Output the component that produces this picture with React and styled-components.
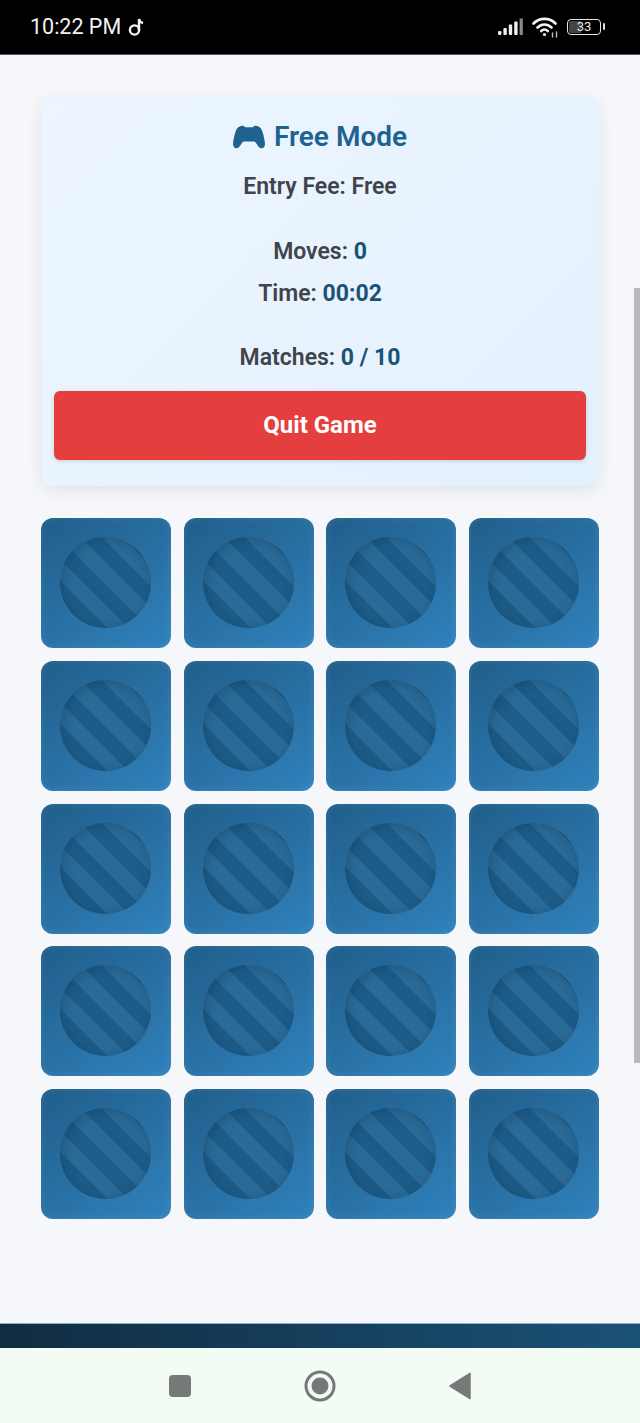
import React from 'react'
import styled, { createGlobalStyle } from 'styled-components'

const GlobalStyle = createGlobalStyle`
  html, body {
    margin: 0;
    padding: 0;
    background: #f5f7fb;
    font-family: Roboto, "Liberation Sans", sans-serif;
  }
`

const Screen = styled.div`
  position: relative;
  width: 640px;
  height: 1423px;
  display: flex;
  flex-direction: column;
  overflow: hidden;
`

const StatusBar = styled.div`
  height: 55px;
  flex: none;
  background: #000;
  border-bottom: 1px solid #555;
  display: flex;
  align-items: center;
  justify-content: space-between;
  padding: 0 33px 1px 30px;
  box-sizing: border-box;
  color: #f2f2f2;
`

const Clock = styled.div`
  display: flex;
  align-items: center;
  gap: 7px;
  font-size: 21.5px;
`

const StatusIcons = styled.div`
  display: flex;
  align-items: center;
  gap: 8px;
`

const Battery = styled.div`
  position: relative;
  width: 34px;
  height: 16px;
  border: 1.5px solid #e8e8e8;
  border-radius: 4px;
  box-sizing: border-box;
  display: flex;
  align-items: center;
  justify-content: center;
  font-size: 13px;
  color: #e8e8e8;
  margin-right: 6px;
  background: linear-gradient(90deg, #444 0, #444 42%, #000 42%);
  background-clip: content-box;
  padding: 1px;
  &::after {
    content: '';
    position: absolute;
    right: -5px;
    top: 3px;
    width: 2px;
    height: 7px;
    background: #ddd;
    border-radius: 1px;
  }
`

const Page = styled.main`
  flex: 1;
  padding: 42px 41px 0;
  box-sizing: border-box;
  background: #f5f7fb;
`

const InfoCard = styled.section`
  height: 389px;
  box-sizing: border-box;
  padding: 26px 13px 0;
  border-radius: 12px;
  background: linear-gradient(135deg, #edf6ff, #e3f0fe);
  box-shadow: 0 4px 16px rgba(0, 0, 0, 0.09);
  display: flex;
  flex-direction: column;
  align-items: center;
`

const Title = styled.h2`
  margin: 0;
  height: 28px;
  display: flex;
  align-items: center;
  gap: 9px;
  font-size: 28px;
  line-height: 28px;
  font-weight: 600;
  color: #20628f;
`

const Line = styled.p`
  margin: ${(p) => p.$top}px 0 0;
  font-size: 23px;
  line-height: 25px;
  font-weight: 600;
  color: #40444a;
`

const Value = styled.span`
  color: #1a5276;
  font-weight: 700;
`

const QuitButton = styled.button`
  margin-top: 21px;
  width: 100%;
  height: 69px;
  flex: none;
  border: none;
  border-radius: 6px;
  padding: 0 0 2px;
  background: #e53e3e;
  color: #fff;
  font-family: inherit;
  font-size: 24px;
  font-weight: 700;
  box-shadow: 0 1px 4px rgba(0, 0, 0, 0.15);
`

const Board = styled.div`
  margin-top: 32px;
  display: grid;
  grid-template-columns: repeat(4, 130px);
  grid-auto-rows: 130px;
  gap: 12.75px 12.67px;
`

const Tile = styled.div`
  border-radius: 12px;
  background: linear-gradient(145deg, #205e8a, #3081bc);
  box-shadow: inset 0 0 7px rgba(255, 255, 255, 0.1);
  display: flex;
  align-items: center;
  justify-content: center;
  padding: 0 1px 1px 0;
  box-sizing: border-box;
`

const Disc = styled.div`
  width: 91px;
  height: 91px;
  border-radius: 50%;
  background: repeating-linear-gradient(
    45deg,
    #1d5c88 -11.5px,
    #1d5c88 3.5px,
    #2a6a97 3.5px,
    #2a6a97 18.5px,
    #1d5c88 18.5px
  );
  box-shadow: inset 2px 2px 12px rgba(8, 40, 65, 0.28);
`

const FooterBar = styled.div`
  height: 25px;
  flex: none;
  background: linear-gradient(90deg, #112c42, #1a5276);
  border-top: 1px solid #8fb0c4;
  box-sizing: border-box;
`

const NavBar = styled.nav`
  height: 75px;
  flex: none;
  background: #f2fcf5;
  display: grid;
  grid-template-columns: repeat(3, 140px);
  justify-content: center;
  align-items: center;
  justify-items: center;
`

const ScrollThumb = styled.div`
  position: absolute;
  right: 0;
  top: 288px;
  width: 6px;
  height: 775px;
  background: #b9b9b9;
`

const GamepadIcon = () => (
  <svg width="32" height="24" viewBox="0 0 32 24" fill="#20628f">
    <path d="M7 1.2C8.8.4 11 .5 12 2.2h8C21 .5 23.2.4 25 1.2c2.6 1.1 4 3.4 4.9 6.8.9 3.3 1.8 7 2 10.2.2 2.6-.7 4.6-2.7 5-2 .4-3.2-.7-4.3-2.4l-2-3c-.7-1-1.4-1.4-2.6-1.4h-8.6c-1.2 0-1.9.4-2.6 1.4l-2 3c-1.1 1.7-2.3 2.8-4.3 2.4-2-.4-2.9-2.4-2.7-5 .2-3.2 1.1-6.9 2-10.2C3 4.6 4.4 2.3 7 1.2z" />
  </svg>
)

const MusicNote = () => (
  <svg width="16" height="20" viewBox="0 0 16 20" fill="none" stroke="#f2f2f2" strokeWidth="2.4">
    <circle cx="6.5" cy="13" r="4.6" />
    <path d="M11 13V2c.4 2.4 2 3.6 4 4" />
  </svg>
)

const SignalIcon = () => (
  <svg width="26" height="18" viewBox="0 0 26 18">
    <rect x="0" y="13" width="3.4" height="4" rx="1.2" fill="#f0f0f0" />
    <rect x="5.4" y="10" width="3.4" height="7" rx="1" fill="#f0f0f0" />
    <rect x="10.8" y="6.5" width="3.4" height="10.5" rx="1" fill="#f0f0f0" />
    <rect x="16.2" y="3.5" width="3.4" height="13.5" rx="1" fill="#f0f0f0" />
    <rect x="21.6" y="0.5" width="3.2" height="16.5" fill="#8a8a8a" />
  </svg>
)

const WifiIcon = () => (
  <svg width="27" height="22" viewBox="0 0 27 22" fill="none" stroke="#f4f4f4" strokeWidth="2.6" strokeLinecap="round">
    <path d="M1.5 7.5C7.5 1.3 17.5 1.3 23.5 7.5" />
    <path d="M5.5 11.5C9.5 7.4 15.5 7.4 19.5 11.5" />
    <path d="M9.2 15C11.2 13.2 13.8 13.2 15.8 15" />
    <circle cx="12.5" cy="18.5" r="1.6" fill="#f4f4f4" stroke="none" />
    <path d="M20.5 21v-4M24.5 21v-5" strokeWidth="1.4" stroke="#bbb" />
  </svg>
)

const tiles = Array.from({ length: 20 }, (_, i) => i)

function App() {
  return (
    <Screen>
      <GlobalStyle />
      <StatusBar>
        <Clock>
          10:22 PM
          <MusicNote />
        </Clock>
        <StatusIcons>
          <SignalIcon />
          <WifiIcon />
          <Battery>33</Battery>
        </StatusIcons>
      </StatusBar>
      <Page>
        <InfoCard>
          <Title>
            <GamepadIcon />
            Free Mode
          </Title>
          <Line $top={23}>Entry Fee: Free</Line>
          <Line $top={40}>Moves: <Value>0</Value></Line>
          <Line $top={17}>Time: <Value>00:02</Value></Line>
          <Line $top={39}>Matches: <Value>0 / 10</Value></Line>
          <QuitButton>Quit Game</QuitButton>
        </InfoCard>
        <Board>
          {tiles.map((t) => (
            <Tile key={t}>
              <Disc />
            </Tile>
          ))}
        </Board>
      </Page>
      <FooterBar />
      <NavBar>
        <svg width="24" height="24" viewBox="0 0 24 24">
          <rect x="1" y="1" width="22" height="22" rx="4" fill="#757a78" />
        </svg>
        <svg width="32" height="32" viewBox="0 0 32 32">
          <circle cx="16" cy="16" r="14" fill="none" stroke="#757a78" strokeWidth="3" />
          <circle cx="16" cy="16" r="8.5" fill="#757a78" />
        </svg>
        <svg width="24" height="28" viewBox="0 0 24 28">
          <path d="M22 1.5v25L2 14z" fill="#757a78" stroke="#757a78" strokeWidth="1.5" strokeLinejoin="round" />
        </svg>
      </NavBar>
      <ScrollThumb />
    </Screen>
  )
}

export default App
